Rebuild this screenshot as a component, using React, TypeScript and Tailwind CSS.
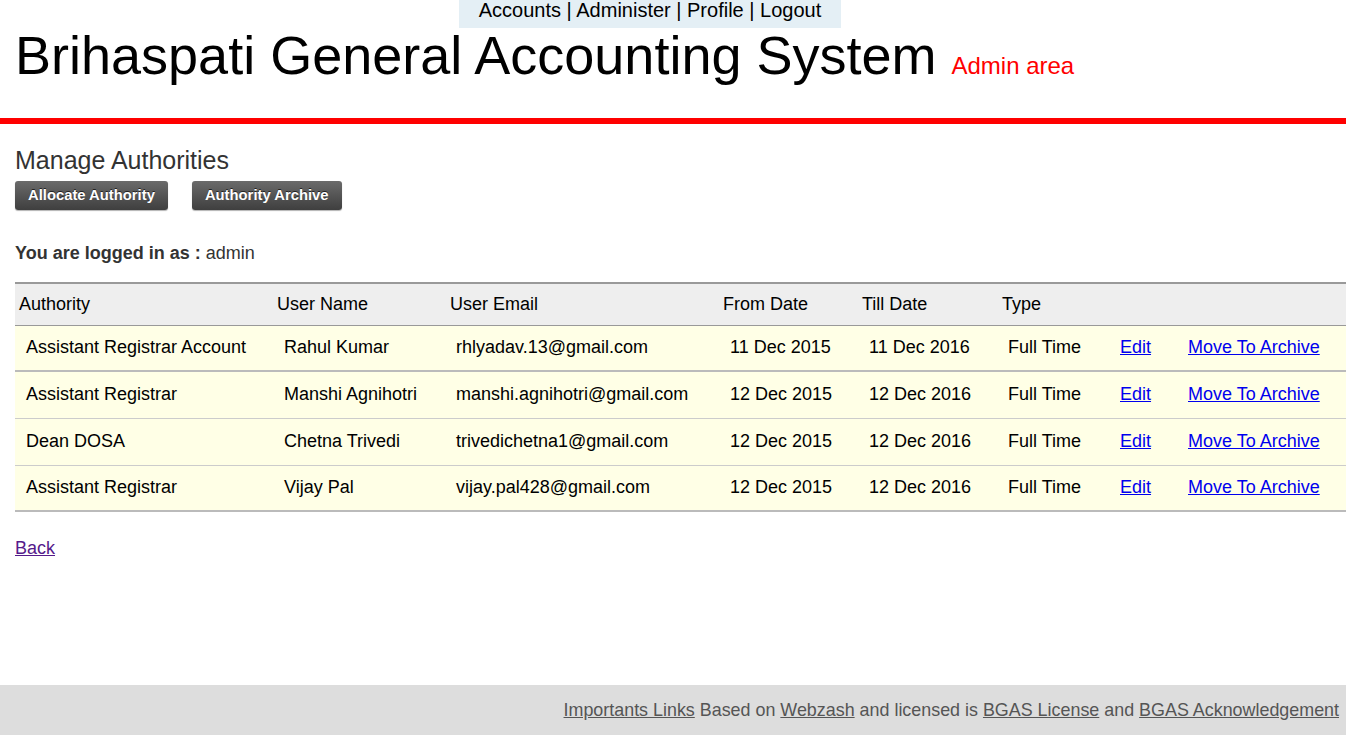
import React from 'react';

type Row = {
  authority: string;
  name: string;
  email: string;
  from: string;
  till: string;
  type: string;
};

const rows: Row[] = [
  { authority: 'Assistant Registrar Account', name: 'Rahul Kumar', email: 'rhlyadav.13@gmail.com', from: '11 Dec 2015', till: '11 Dec 2016', type: 'Full Time' },
  { authority: 'Assistant Registrar', name: 'Manshi Agnihotri', email: 'manshi.agnihotri@gmail.com', from: '12 Dec 2015', till: '12 Dec 2016', type: 'Full Time' },
  { authority: 'Dean DOSA', name: 'Chetna Trivedi', email: 'trivedichetna1@gmail.com', from: '12 Dec 2015', till: '12 Dec 2016', type: 'Full Time' },
  { authority: 'Assistant Registrar', name: 'Vijay Pal', email: 'vijay.pal428@gmail.com', from: '12 Dec 2015', till: '12 Dec 2016', type: 'Full Time' },
];

function Btn({ children }: { children: React.ReactNode }) {
  return (
    <button className="h-[29px] px-[13px] rounded-[3px] bg-gradient-to-b from-[#6b6b6b] to-[#3f3f3f] text-white text-[14.8px] font-bold [text-shadow:0_-1px_0_#222] shadow-[0_1px_1px_rgba(0,0,0,0.3)]">
      {children}
    </button>
  );
}

export default function App() {
  return (
    <div className="min-h-[735px] flex flex-col bg-white font-['Liberation_Sans',Arial,sans-serif] text-[18px] overflow-hidden">
      {/* top nav */}
      <div className="flex justify-center pr-[46px]">
        <div className="bg-[#e4eff5] h-[28px] px-[20px] text-[20px] leading-[21px] text-black">
          Accounts | Administer | Profile | Logout
        </div>
      </div>

      {/* title */}
      <div className="flex items-baseline pl-[15px] h-[90px]">
        <h1 className="text-[54px] leading-[54px] text-black">Brihaspati General Accounting System</h1>
        <span className="ml-[15px] text-[24px] text-[#ff0000]">Admin area</span>
      </div>
      <div className="h-[6px] bg-[#ff0000]" />

      <div className="px-[15px] flex-1">
        <h2 className="mt-[21px] text-[25px] leading-[30px] text-[#333]">Manage Authorities</h2>
        <div className="flex gap-[24px] mt-[6px]">
          <Btn>Allocate Authority</Btn>
          <Btn>Authority Archive</Btn>
        </div>

        <p className="mt-[30px] text-[#333]">
          <b>You are logged in as :</b> admin
        </p>

        <table className="mt-[15px] w-[1331px] border-collapse text-black table-fixed">
          <colgroup>
            <col className="w-[258px]" />
            <col className="w-[173px]" />
            <col className="w-[273px]" />
            <col className="w-[139px]" />
            <col className="w-[140px]" />
            <col className="w-[111px]" />
            <col className="w-[68px]" />
            <col />
          </colgroup>
          <thead>
            <tr className="bg-[#eeeeee] border-t-2 border-[#999] border-b border-b-[#999] h-[42px] text-left">
              <th className="font-normal pl-[4px]">Authority</th>
              <th className="font-normal pl-[4px]">User Name</th>
              <th className="font-normal pl-[4px]">User Email</th>
              <th className="font-normal pl-[4px]">From Date</th>
              <th className="font-normal pl-[4px]">Till Date</th>
              <th className="font-normal pl-[4px]">Type</th>
              <th />
              <th />
            </tr>
          </thead>
          <tbody>
            {rows.map((r, i) => (
              <tr
                key={i}
                className={
                  'bg-[#ffffe6] ' +
                  (i === 0 || i === rows.length - 1 ? 'h-[46px] border-b-2 border-[#bbb]' : 'h-[47px] border-b border-[#ccc]')
                }
              >
                <td className="pl-[11px] whitespace-nowrap">{r.authority}</td>
                <td className="pl-[11px] whitespace-nowrap">{r.name}</td>
                <td className="pl-[10px] whitespace-nowrap">{r.email}</td>
                <td className="pl-[11px] whitespace-nowrap">{r.from}</td>
                <td className="pl-[11px] whitespace-nowrap">{r.till}</td>
                <td className="pl-[10px] whitespace-nowrap">{r.type}</td>
                <td className="pl-[11px]">
                  <a href="#" className="text-[#0000ee] underline">Edit</a>
                </td>
                <td className="pl-[11px] whitespace-nowrap">
                  <a href="#" className="text-[#0000ee] underline">Move To Archive</a>
                </td>
              </tr>
            ))}
          </tbody>
        </table>

        <p className="mt-[23px]">
          <a href="#" className="text-[#551a8b] underline">Back</a>
        </p>
      </div>

      {/* footer */}
      <div className="h-[50px] bg-[#dddddd] flex items-center justify-end pr-[7px] text-[#555] text-[17.9px]">
        <span>
          <a href="#" className="underline">Importants Links</a> Based on{' '}
          <a href="#" className="underline">Webzash</a> and licensed is{' '}
          <a href="#" className="underline">BGAS License</a> and{' '}
          <a href="#" className="underline">BGAS Acknowledgement</a>
        </span>
      </div>
    </div>
  );
}
